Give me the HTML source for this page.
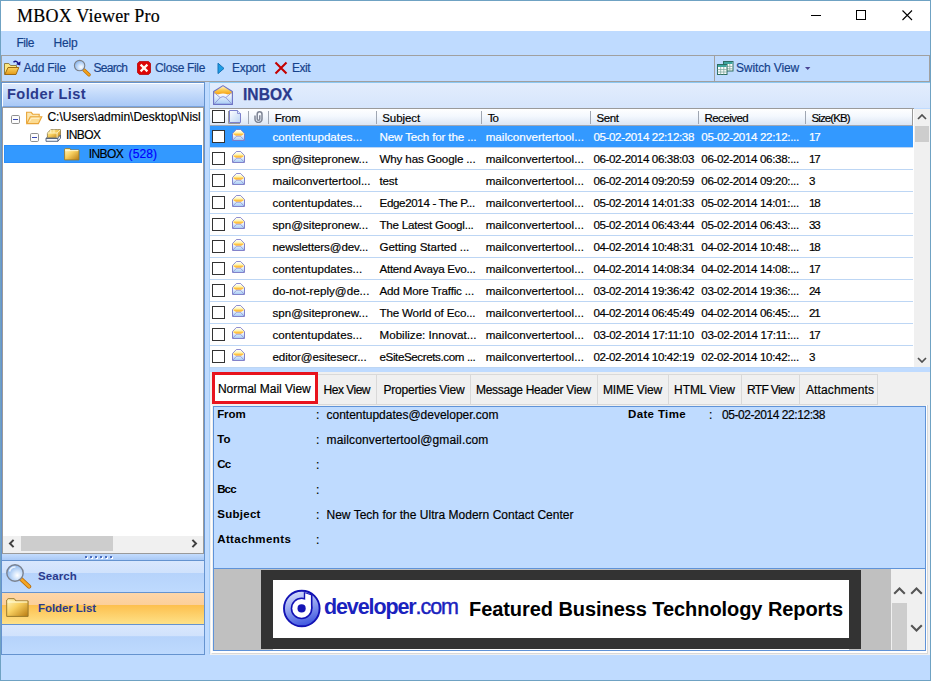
<!DOCTYPE html>
<html lang="en"><head><meta charset="utf-8"><title>MBOX Viewer Pro</title>
<style>
html,body{margin:0;padding:0;background:#BFDBFF;}
body{width:931px;height:681px;overflow:hidden;font-family:"Liberation Sans",sans-serif;font-size:12px;}
#win{position:relative;width:931px;height:681px;background:#BFDBFF;overflow:hidden;}
#win div,#win span,#win svg{position:absolute;box-sizing:border-box;}
.t{white-space:pre;line-height:1;color:#000;-webkit-text-stroke:0.18px currentColor;}
#titlebar{left:1px;top:1px;width:929px;height:30px;background:#fff;}
.wb{left:0;top:0;background:#6FA2C3;}
.tool{top:55px;height:27px;border:1px solid #A0A0A0;background:#BFDBFF;}
/* left panel */
#lp{left:1px;top:82px;width:204px;height:573px;border:1px solid #6593CF;background:#BFDBFF;}
#lph{left:2px;top:83px;width:202px;height:24px;border-left:1px solid #fff;border-top:1px solid #fff;border-bottom:1px solid #79A3DE;background:linear-gradient(#DDE9FD,#C3DAFB 45%,#A9C8F6);}
#tree{left:2px;top:107px;width:202px;height:447px;border:1px solid #9A9A9A;background:#fff;}
#treesel{left:4px;top:145px;width:198px;height:18px;background:#3399FF;border:1px solid #2A8FFB;}
#hsb{left:3px;top:536px;width:200px;height:17px;background:#F0F0F0;}
#hthumb{left:21px;top:536px;width:92px;height:15px;background:#CDCDCD;}
.nav{left:2px;width:202px;}
#grip{top:554px;height:7px;background:linear-gradient(#C4DCFD,#A9C9F6);border-bottom:1px solid #6593CF;}
#navsearch{top:561px;height:32px;background:linear-gradient(#D9E7FD 0,#D0E2FC 38%,#B6D3FB 40%,#BEDAFE 100%);border-bottom:1px solid #6593CF;}
#navfolder{top:593px;height:32px;background:linear-gradient(#FDD6A8 0,#FCCF9A 38%,#FDC04E 40%,#FEE188 100%);border-bottom:1px solid #6593CF;}
#navempty{top:625px;height:29px;background:linear-gradient(#D9E7FD 0,#D0E2FC 38%,#B6D3FB 40%,#BEDAFE 100%);}
/* right panel */
#rp{left:209px;top:82px;width:721px;height:572px;background:#BFDBFF;border-left:1px solid #A6CDF6;border-top:1px solid #8CC8F2;}
#rph{left:210px;top:83px;width:720px;height:25px;background:linear-gradient(#E2EDFD,#D6E5FC);}
#list{left:210px;top:108px;width:704px;height:259px;background:#fff;border-top:1px solid #9A9A9A;}
#colh{left:210px;top:109px;width:703px;height:17px;background:linear-gradient(#fff,#F4F8FE 45%,#DCE6F4);border-bottom:1px solid #A0A7B4;border-right:1px solid #9A9A9A;}
.csep{top:111px;width:1px;height:13px;background:#9FA6B2;}
.rsep{left:210px;width:703px;height:1px;background:#BDD6F4;}
#rowsel{left:210px;top:126px;width:703px;height:21px;background:#3399FF;}
.cb{left:212px;width:13px;height:13px;border:1px solid #333;background:#fff;}
#vsb{left:914px;top:109px;width:16px;height:258px;background:#F0F0F0;}
#vthumb{left:915px;top:126px;width:14px;height:16px;background:#CDCDCD;}
/* tabs */
#tabctl{left:210px;top:372px;width:720px;height:283px;background:#F0F0F0;}
#tabpage{left:211px;top:405px;width:717px;height:249px;border-left:1px solid #fff;border-right:1px solid #D8D8D8;border-bottom:1px solid #D8D8D8;}
#tabpage2{left:212px;top:405px;width:715px;height:248px;border-right:1px solid #fff;border-bottom:2px solid #fff;}
.tab{top:374px;height:31px;background:#F0F0F0;border:1px solid #D9D9D9;border-left:none;}
#tabsel{left:212px;top:372px;width:106px;height:32px;background:#fff;border:3px solid #E8131D;}
/* detail */
#detail{left:213px;top:406px;width:713px;height:163px;background:#BFDBFF;border:1px solid #5F93D8;border-bottom:none;}
#preview{left:213px;top:568px;width:713px;height:83px;border:1px solid #5F93D8;background:#C0C0C0;overflow:hidden;}
#pdark{left:261px;top:570px;width:600px;height:79px;background:#333;}
#pwhite{left:273px;top:580px;width:576px;height:58px;background:#fff;}
#pwhite2{left:273px;top:649px;width:576px;height:1px;background:#fff;}
#psb1{left:891px;top:569px;width:17px;height:81px;background:#F0F0F0;}
#psb2{left:908px;top:569px;width:17px;height:81px;background:#F0F0F0;}
#pthumb{left:892px;top:603px;width:15px;height:47px;background:#CDCDCD;}
.serif{font-family:"Liberation Serif",serif;}

</style></head>
<body>
<div id="win">
<svg width="0" height="0" style="left:0;top:0">
<defs>
<linearGradient id="gFold" x1="0" y1="0" x2="1" y2="1"><stop offset="0" stop-color="#FFF9C8"/><stop offset="0.45" stop-color="#F8D060"/><stop offset="1" stop-color="#B87A10"/></linearGradient>
<linearGradient id="gFold2" x1="0" y1="0" x2="0" y2="1"><stop offset="0" stop-color="#FBD25E"/><stop offset="1" stop-color="#E39A17"/></linearGradient>
<linearGradient id="gEnv" x1="0" y1="0" x2="0" y2="1"><stop offset="0" stop-color="#FFFFFF"/><stop offset="1" stop-color="#A9CDF5"/></linearGradient>
<linearGradient id="gFlap" x1="0" y1="0" x2="0" y2="1"><stop offset="0" stop-color="#FFF9DC"/><stop offset="0.45" stop-color="#FBC84A"/><stop offset="0.75" stop-color="#F6A51A"/><stop offset="1" stop-color="#FBE3A6"/></linearGradient>
<linearGradient id="gFlapS" x1="0" y1="0" x2="0" y2="1"><stop offset="0" stop-color="#FFFFFF"/><stop offset="0.45" stop-color="#FFF6B0"/><stop offset="0.75" stop-color="#FFC242"/><stop offset="1" stop-color="#FFB030"/></linearGradient>
<radialGradient id="gLens" cx="0.64" cy="0.64" r="0.8"><stop offset="0" stop-color="#FFFFFF"/><stop offset="0.3" stop-color="#D3E5FB"/><stop offset="1" stop-color="#6FA5E8"/></radialGradient>
<linearGradient id="gLogo" x1="0.2" y1="0" x2="0.5" y2="1"><stop offset="0" stop-color="#DCE2FC"/><stop offset="0.45" stop-color="#98A8F0"/><stop offset="1" stop-color="#4058E0"/></linearGradient>
<linearGradient id="gPage" x1="0" y1="0" x2="1" y2="1"><stop offset="0" stop-color="#FFFFFF"/><stop offset="1" stop-color="#BCD5F5"/></linearGradient>
<symbol id="iMail" viewBox="0 0 13 12">
 <path d="M0.5 4.5L4.3 0.6h4.4l3.8 3.9v7H0.5z" fill="#fff" stroke="#7474C4" stroke-width="0.9"/>
 <path d="M1 4.6L4.5 1.1h4l3.5 3.5v2.2H1z" fill="url(#gFlapS)"/>
 <path d="M1 4.9l3.2 2.4h4.6l3.2-2.4v6.1H1z" fill="url(#gEnv)"/>
 <path d="M4.2 7.3h4.6M1 11l3.4-3.6M12 11l-3.4-3.6" fill="none" stroke="#8A8AD0" stroke-width="0.7"/>
</symbol>
<symbol id="iExp" viewBox="0 0 9 9">
 <rect x="0.5" y="0.5" width="8" height="8" rx="1.2" fill="#FCFCFC" stroke="#8F8F8F"/>
 <path d="M2 4.5h5" stroke="#3A48B4" stroke-width="1"/>
</symbol>
<symbol id="iChevU" viewBox="0 0 10 6"><path d="M1 5l4-4l4 4" fill="none" stroke="#505050" stroke-width="1.7"/></symbol>
<symbol id="iChevD" viewBox="0 0 10 6"><path d="M1 1l4 4l4-4" fill="none" stroke="#505050" stroke-width="1.7"/></symbol>
<symbol id="iChevL" viewBox="0 0 7 9"><path d="M5.6 0.9L2 4.5l3.6 3.6" fill="none" stroke="#404040" stroke-width="2"/></symbol>
<symbol id="iChevR" viewBox="0 0 7 9"><path d="M1.4 0.9L5 4.5L1.4 8.1" fill="none" stroke="#404040" stroke-width="2"/></symbol>
</defs></svg>
<div id="titlebar"></div>
<!-- window controls -->
<svg style="left:800px;top:1px" width="130" height="30" viewBox="0 0 130 30">
 <path d="M11 14.5h10" stroke="#000" stroke-width="1" fill="none"/>
 <rect x="56.5" y="9.5" width="9" height="9" stroke="#000" stroke-width="1" fill="none"/>
 <path d="M102.5 9.5l9.5 9.5M112 9.5l-9.5 9.5" stroke="#000" stroke-width="1.1" fill="none"/>
</svg>
<!-- toolbars -->
<div class="tool" style="left:1px;width:714px"></div>
<div class="tool" style="left:714px;width:216px"></div>
<!-- left panel -->
<div id="lp"></div>
<div id="lph"></div>
<div id="tree"></div>
<div id="treesel"></div>
<div id="hsb"></div>
<div id="hthumb"></div>
<div class="nav" id="grip"></div>
<div class="nav" id="navsearch"></div>
<div class="nav" id="navfolder"></div>
<div class="nav" id="navempty"></div>
<!-- right panel -->
<div id="rp"></div>
<div id="rph"></div>
<div id="list"></div>
<div id="colh"></div>
<div id="rowsel"></div>
<div id="vsb"></div>
<div id="vthumb"></div>
<div class="csep" style="left:248px"></div>
<div class="csep" style="left:268px"></div>
<div class="csep" style="left:376px"></div>
<div class="csep" style="left:481px"></div>
<div class="csep" style="left:590px"></div>
<div class="csep" style="left:698px"></div>
<div class="csep" style="left:805px"></div>
<div class="cb" style="top:110px"></div>
<div class="rsep" style="top:147px"></div>
<div class="cb" style="top:130px"></div>
<div class="rsep" style="top:169px"></div>
<div class="cb" style="top:152px"></div>
<div class="rsep" style="top:191px"></div>
<div class="cb" style="top:174px"></div>
<div class="rsep" style="top:213px"></div>
<div class="cb" style="top:196px"></div>
<div class="rsep" style="top:235px"></div>
<div class="cb" style="top:218px"></div>
<div class="rsep" style="top:257px"></div>
<div class="cb" style="top:240px"></div>
<div class="rsep" style="top:279px"></div>
<div class="cb" style="top:262px"></div>
<div class="rsep" style="top:301px"></div>
<div class="cb" style="top:284px"></div>
<div class="rsep" style="top:323px"></div>
<div class="cb" style="top:306px"></div>
<div class="rsep" style="top:345px"></div>
<div class="cb" style="top:328px"></div>
<div class="rsep" style="top:367px"></div>
<div class="cb" style="top:350px"></div>
<!-- tabs -->
<div id="tabctl"></div>
<div id="tabpage"></div>
<div id="tabpage2"></div>
<div id="tabsel"></div>
<div class="tab" style="left:318px;width:59px"></div>
<div class="tab" style="left:377px;width:94px"></div>
<div class="tab" style="left:471px;width:127px"></div>
<div class="tab" style="left:598px;width:71px"></div>
<div class="tab" style="left:669px;width:73px"></div>
<div class="tab" style="left:742px;width:58px"></div>
<div class="tab" style="left:800px;width:78px"></div>
<div id="detail"></div>
<div id="preview"></div>
<div id="pdark"></div>
<div id="pwhite"></div>
<div id="pwhite2"></div>
<div id="psb1"></div>
<div id="psb2"></div>
<div id="pthumb"></div>
<!-- toolbar icons -->
<svg style="left:4px;top:59px" width="18" height="17" viewBox="0 0 18 17">
 <path d="M0.5 15.5V4.5h4.4l1.6 2h6v2.5" fill="#FBE67E" stroke="#8F7F45" stroke-width="1"/>
 <path d="M0.8 15.5h11.2l2.8-7H4z" fill="url(#gFold2)" stroke="#A06A12" stroke-width="1"/>
 <path d="M9.5 3.2c1.8-1.6 3.8-1.2 4.8 1.6" fill="none" stroke="#15158C" stroke-width="1.5"/>
 <path d="M12 5.2l4.2 1.3l0.3-4.2z" fill="#15158C"/>
</svg>
<svg style="left:73px;top:59px" width="18" height="18" viewBox="0 0 18 18">
 <path d="M11 11l5 4.8" stroke="#B86E08" stroke-width="3.4" stroke-linecap="round"/>
 <path d="M11 11l5 4.8" stroke="#F3A21B" stroke-width="2" stroke-linecap="round"/>
 <circle cx="6.6" cy="6.6" r="5.2" fill="url(#gLens)" stroke="#7C8088" stroke-width="1.1"/>
</svg>
<svg style="left:137px;top:61px" width="14" height="14" viewBox="0 0 14 14">
 <path d="M2.5 0.4h9l2.1 2.1v9l-2.1 2.1h-9L0.4 11.5v-9z" fill="#DD0404" stroke="#B20000" stroke-width="0.8"/>
 <path d="M3.6 3.6l6.8 6.8M10.4 3.6l-6.8 6.8" stroke="#FFF8F0" stroke-width="2.2"/>
</svg>
<svg style="left:217px;top:62px" width="9" height="13" viewBox="0 0 9 13">
 <path d="M1 1.2l6 5.2l-6 5.2z" fill="#1E9EE6" stroke="#1573B8" stroke-width="1" stroke-linejoin="round"/>
</svg>
<svg style="left:274px;top:61px" width="14" height="14" viewBox="0 0 14 14">
 <path d="M1.5 1.6l11 11M12.5 1.6l-11 11" stroke="#C40000" stroke-width="2.1"/>
</svg>
<svg style="left:717px;top:61px" width="17" height="14" viewBox="0 0 17 14">
 <rect x="6.5" y="0.5" width="9.5" height="9.5" fill="#fff" stroke="#2E6E62"/>
 <rect x="7" y="1" width="8.5" height="2" fill="#3FA6A0"/>
 <path d="M9.7 3v7M12.8 3v7M6.5 5.4h9.5M6.5 7.8h9.5" stroke="#7FA8A0" stroke-width="0.8"/>
 <rect x="0.5" y="3.5" width="9.5" height="10" fill="#fff" stroke="#2E6E62"/>
 <rect x="1" y="4" width="8.5" height="2" fill="#3FA6A0"/>
 <path d="M3.7 6v7.5M6.8 6v7.5M0.5 8.6h9.5M0.5 11h9.5" stroke="#7FA8A0" stroke-width="0.8"/>
</svg>
<svg style="left:805px;top:67px" width="6" height="4" viewBox="0 0 6 4"><path d="M0 0h5.4l-2.7 3z" fill="#4B4593"/></svg>
<!-- tree icons -->
<svg style="left:11px;top:115px" width="9" height="9"><use href="#iExp"/></svg>
<svg style="left:30px;top:133px" width="9" height="9"><use href="#iExp"/></svg>
<svg style="left:26px;top:111px" width="17" height="14" viewBox="0 0 17 14">
 <path d="M0.6 12.5V1.3h4.6l1.5 1.9h6.5v2.4" fill="#FCE7B0" stroke="#E9A538" stroke-width="1.1"/>
 <path d="M0.8 12.6h11.6l3.4-6.9H4.3z" fill="#FBDB92" stroke="#E9A538" stroke-width="1.1"/>
 <path d="M3.5 10.5l2-3.2h7.8" fill="none" stroke="#FFF3D0" stroke-width="1"/>
</svg>
<svg style="left:45px;top:128px" width="17" height="15" viewBox="0 0 17 15">
 <path d="M1 10.5l3-3.5h11.5l-2.6 3.5z" fill="#E7EEF8" stroke="#5A6A86" stroke-width="0.9"/>
 <path d="M1 10.5v2.8h11.9v-2.8zM12.9 13.3l2.6-3.2V7" fill="#F4F8FE" stroke="#4A5A76" stroke-width="0.9"/>
 <path d="M2.4 9.6V5l3.3-3.4l6.8 0l3 0v5.2l-3.4 2.8z" fill="url(#gFold)" stroke="#8A7A4A" stroke-width="0.8"/>
 <path d="M2.4 5h9.7l3.2-3.2M12.1 5v4.6M5.7 1.6v3.2M9 1.6v3.2" fill="none" stroke="#FFF6C8" stroke-width="0.9"/>
</svg>
<svg style="left:64px;top:148px" width="16" height="13" viewBox="0 0 16 13">
 <path d="M0.6 11.9V1.2l1-0.8h4.2l1.2 1.6h8v9.9z" fill="url(#gFold)" stroke="#9A7A2A" stroke-width="0.9"/>
 <path d="M1.2 2.6h13.2" stroke="#FFF8D0" stroke-width="1"/>
</svg>
<!-- header envelope -->
<svg style="left:213px;top:85px" width="20" height="20" viewBox="0 0 20 20">
 <path d="M0.6 6.5L10 0.6l9.4 5.9v5H0.6z" fill="url(#gFlap)"/>
 <path d="M1.1 8.2l4.2 1.4q4.7-2.2 9.4 0l4.2-1.4V19H1.1z" fill="url(#gEnv)"/>
 <path d="M0.6 6.5L10 0.6l9.4 5.9V19.4H0.6z" fill="none" stroke="#6C72C4" stroke-width="1.1" stroke-linejoin="round"/>
 <path d="M1.2 7.6l6 5M18.8 7.6l-6 5M1.2 19l6-6.4q2.8-2 5.6 0l6 6.4" fill="none" stroke="#8D93D4" stroke-width="0.9"/>
</svg>
<!-- column header icons -->
<svg style="left:228px;top:110px" width="14" height="14" viewBox="0 0 14 14">
 <path d="M0.5 1v12.5h11.5" fill="none" stroke="#9A9A9A" stroke-width="1"/>
 <path d="M1.5 0.5h8l3 3v9h-11z" fill="url(#gPage)" stroke="#7B80CC" stroke-width="1"/>
 <path d="M9.5 0.5v3h3" fill="#DDEBFB" stroke="#7B80CC" stroke-width="0.8"/>
</svg>
<svg style="left:253px;top:111px" width="11" height="12" viewBox="0 0 11 12">
 <path d="M2 4.5V8a3.5 3.5 0 0 0 7 0V3.2a2.4 2.4 0 0 0-4.8 0V8a1.3 1.3 0 0 0 2.6 0V4.2" fill="none" stroke="#7D8494" stroke-width="1.5"/>
</svg>
<svg style="left:232px;top:129px" width="13" height="12"><use href="#iMail"/></svg>
<svg style="left:232px;top:151px" width="13" height="12"><use href="#iMail"/></svg>
<svg style="left:232px;top:173px" width="13" height="12"><use href="#iMail"/></svg>
<svg style="left:232px;top:195px" width="13" height="12"><use href="#iMail"/></svg>
<svg style="left:232px;top:217px" width="13" height="12"><use href="#iMail"/></svg>
<svg style="left:232px;top:239px" width="13" height="12"><use href="#iMail"/></svg>
<svg style="left:232px;top:261px" width="13" height="12"><use href="#iMail"/></svg>
<svg style="left:232px;top:283px" width="13" height="12"><use href="#iMail"/></svg>
<svg style="left:232px;top:305px" width="13" height="12"><use href="#iMail"/></svg>
<svg style="left:232px;top:327px" width="13" height="12"><use href="#iMail"/></svg>
<svg style="left:232px;top:349px" width="13" height="12"><use href="#iMail"/></svg>
<!-- scrollbar arrows -->
<svg style="left:917px;top:114px" width="10" height="6"><use href="#iChevU"/></svg>
<svg style="left:917px;top:357px" width="10" height="6"><use href="#iChevD"/></svg>
<svg style="left:8px;top:539px" width="7" height="9"><use href="#iChevL"/></svg>
<svg style="left:191px;top:539px" width="7" height="9"><use href="#iChevR"/></svg>
<svg style="left:893px;top:586px" width="13" height="9" viewBox="0 0 13 9"><path d="M1.2 7.8l5.3-5.3l5.3 5.3" fill="none" stroke="#555" stroke-width="2.1"/></svg>
<svg style="left:910px;top:586px" width="13" height="9" viewBox="0 0 13 9"><path d="M1.2 7.8l5.3-5.3l5.3 5.3" fill="none" stroke="#555" stroke-width="2.1"/></svg>
<svg style="left:910px;top:624px" width="13" height="9" viewBox="0 0 13 9"><path d="M1.2 1.2l5.3 5.3l5.3-5.3" fill="none" stroke="#555" stroke-width="2.1"/></svg>
<!-- nav icons -->
<svg style="left:5px;top:563px" width="27" height="27" viewBox="0 0 27 27">
 <path d="M16 16l8 7.5" stroke="#B4690A" stroke-width="4.4" stroke-linecap="round"/>
 <path d="M16 16l8 7.5" stroke="#F5A623" stroke-width="2.8" stroke-linecap="round"/>
 <circle cx="10" cy="10" r="8.2" fill="url(#gLens)" stroke="#7A8290" stroke-width="1.4"/>
 <path d="M4.5 8.5a6 6 0 0 1 6-4.5" fill="none" stroke="#fff" stroke-width="1.6" opacity="0.8"/>
</svg>
<svg style="left:6px;top:598px" width="23" height="20" viewBox="0 0 23 20">
 <path d="M0.7 18.4V2l1.4-1.3h6.2l1.6 2.2h12.2v15.5z" fill="url(#gFold)" stroke="#9A7A2A" stroke-width="1"/>
 <path d="M1.5 4h19.8" stroke="#FFF8D0" stroke-width="1.2"/>
</svg>
<!-- gripper dots -->
<svg style="left:85px;top:556px" width="29" height="4" viewBox="0 0 29 4"><rect x="1" y="1" width="2" height="2" fill="#fff"/><rect x="0" y="0" width="2" height="2" fill="#4C6FBE"/><rect x="6" y="1" width="2" height="2" fill="#fff"/><rect x="5" y="0" width="2" height="2" fill="#4C6FBE"/><rect x="11" y="1" width="2" height="2" fill="#fff"/><rect x="10" y="0" width="2" height="2" fill="#4C6FBE"/><rect x="16" y="1" width="2" height="2" fill="#fff"/><rect x="15" y="0" width="2" height="2" fill="#4C6FBE"/><rect x="21" y="1" width="2" height="2" fill="#fff"/><rect x="20" y="0" width="2" height="2" fill="#4C6FBE"/><rect x="26" y="1" width="2" height="2" fill="#fff"/><rect x="25" y="0" width="2" height="2" fill="#4C6FBE"/></svg>
<!-- developer.com logo mark -->
<svg style="left:282px;top:589px" width="40" height="40" viewBox="0 0 40 40">
 <circle cx="19.8" cy="19.5" r="17.8" fill="url(#gLogo)" stroke="#1212B4" stroke-width="1.9"/>
 <path d="M21.8 2.9V19.5h8.7V5.6z" fill="#1212B4"/>
 <circle cx="19.6" cy="19.4" r="10.9" fill="#1212B4"/>
 <path d="M23.2 4.2V19.5h5.7V6.2z" fill="#fff"/>
 <circle cx="19.6" cy="19.4" r="9.3" fill="#fff"/>
 <circle cx="19.6" cy="19.4" r="4.1" fill="#1414B4"/>
</svg>
<!-- window border -->
<div class="wb" style="width:931px;height:1px"></div>
<div class="wb" style="width:1px;height:681px"></div>
<div class="wb" style="left:930px;width:1px;height:681px"></div>
<div class="wb" style="top:680px;width:931px;height:1px"></div>

<!-- text layer -->
<span class="t serif" style="left:17.0px;top:6.92px;font-size:18px;letter-spacing:0.227px;">MBOX Viewer Pro</span>
<span class="t" style="left:16.5px;top:37.34px;font-size:12px;color:#15428B;letter-spacing:-0.461px;">File</span>
<span class="t" style="left:53.5px;top:37.34px;font-size:12px;color:#15428B;letter-spacing:-0.172px;">Help</span>
<span class="t" style="left:23.4px;top:61.84px;font-size:12px;color:#15428B;letter-spacing:-0.216px;">Add File</span>
<span class="t" style="left:93.5px;top:61.84px;font-size:12px;color:#15428B;letter-spacing:-0.705px;">Search</span>
<span class="t" style="left:155.0px;top:61.84px;font-size:12px;color:#15428B;letter-spacing:-0.336px;">Close File</span>
<span class="t" style="left:232.0px;top:61.84px;font-size:12px;color:#15428B;letter-spacing:-0.281px;">Export</span>
<span class="t" style="left:292.0px;top:61.84px;font-size:12px;color:#15428B;letter-spacing:-0.504px;">Exit</span>
<span class="t" style="left:736.0px;top:61.84px;font-size:12px;color:#15428B;letter-spacing:-0.135px;">Switch View</span>
<span class="t" style="left:7.0px;top:87.34px;font-size:14.6px;font-weight:700;-webkit-text-stroke:0;color:#2B3A8C;letter-spacing:0.401px;">Folder List</span>
<span class="t" style="left:47.4px;top:111.34px;font-size:12px;">C:\Users\admin\Desktop\Nisl</span>
<span class="t" style="left:66.0px;top:129.24px;font-size:12px;letter-spacing:-0.589px;">INBOX</span>
<span class="t" style="left:88.7px;top:148.14px;font-size:12px;letter-spacing:-0.589px;">INBOX</span>
<span class="t" style="left:128.6px;top:148.14px;font-size:12px;color:#0000FF;letter-spacing:0.077px;">(528)</span>
<span class="t" style="left:38.0px;top:571.07px;font-size:11.5px;font-weight:700;-webkit-text-stroke:0;color:#2B3A8C;letter-spacing:0.107px;">Search</span>
<span class="t" style="left:38.0px;top:603.27px;font-size:11.5px;font-weight:700;-webkit-text-stroke:0;color:#2B3A8C;letter-spacing:-0.071px;">Folder List</span>
<span class="t" style="left:243.0px;top:86.69px;font-size:15.6px;font-weight:700;-webkit-text-stroke:0;color:#2B3A8C;letter-spacing:0.022px;-webkit-text-stroke:0.25px #2B3A8C;">INBOX</span>
<span class="t" style="left:274.7px;top:112.57px;font-size:11.5px;letter-spacing:-0.261px;">From</span>
<span class="t" style="left:382.2px;top:112.57px;font-size:11.5px;letter-spacing:-0.051px;">Subject</span>
<span class="t" style="left:487.7px;top:112.57px;font-size:11.5px;letter-spacing:-0.828px;">To</span>
<span class="t" style="left:596.5px;top:112.57px;font-size:11.5px;letter-spacing:-0.368px;">Sent</span>
<span class="t" style="left:704.4px;top:112.57px;font-size:11.5px;letter-spacing:-0.519px;">Received</span>
<span class="t" style="left:811.6px;top:112.57px;font-size:11.5px;letter-spacing:-0.922px;">Size(KB)</span>
<span class="t" style="left:272.5px;top:131.38px;font-size:11.6px;color:#fff;letter-spacing:0.050px;">contentupdates...</span>
<span class="t" style="left:379.5px;top:131.38px;font-size:11.6px;color:#fff;letter-spacing:-0.139px;">New Tech for the ...</span>
<span class="t" style="left:485.7px;top:131.38px;font-size:11.6px;color:#fff;letter-spacing:0.012px;">mailconvertertool...</span>
<span class="t" style="left:593.4px;top:131.38px;font-size:11.6px;color:#fff;letter-spacing:-0.371px;">05-02-2014 22:12:38</span>
<span class="t" style="left:701.3px;top:131.38px;font-size:11.6px;color:#fff;letter-spacing:-0.347px;">05-02-2014 22:12:...</span>
<span class="t" style="left:809.0px;top:131.38px;font-size:11.6px;color:#fff;letter-spacing:-1.203px;">17</span>
<span class="t" style="left:272.5px;top:153.38px;font-size:11.6px;letter-spacing:0.008px;">spn@sitepronew...</span>
<span class="t" style="left:379.5px;top:153.38px;font-size:11.6px;letter-spacing:-0.144px;">Why has Google ...</span>
<span class="t" style="left:485.7px;top:153.38px;font-size:11.6px;letter-spacing:0.012px;">mailconvertertool...</span>
<span class="t" style="left:593.4px;top:153.38px;font-size:11.6px;letter-spacing:-0.371px;">06-02-2014 06:38:03</span>
<span class="t" style="left:701.3px;top:153.38px;font-size:11.6px;letter-spacing:-0.347px;">06-02-2014 06:38:...</span>
<span class="t" style="left:809.0px;top:153.38px;font-size:11.6px;letter-spacing:-1.203px;">17</span>
<span class="t" style="left:272.5px;top:175.38px;font-size:11.6px;letter-spacing:0.007px;">mailconvertertool...</span>
<span class="t" style="left:379.5px;top:175.38px;font-size:11.6px;letter-spacing:-0.172px;">test</span>
<span class="t" style="left:485.7px;top:175.38px;font-size:11.6px;letter-spacing:0.012px;">mailconvertertool...</span>
<span class="t" style="left:593.4px;top:175.38px;font-size:11.6px;letter-spacing:-0.371px;">06-02-2014 09:20:59</span>
<span class="t" style="left:701.3px;top:175.38px;font-size:11.6px;letter-spacing:-0.347px;">06-02-2014 09:20:...</span>
<span class="t" style="left:809.0px;top:175.38px;font-size:11.6px;letter-spacing:-1.253px;">3</span>
<span class="t" style="left:272.5px;top:197.38px;font-size:11.6px;letter-spacing:0.050px;">contentupdates...</span>
<span class="t" style="left:379.5px;top:197.38px;font-size:11.6px;letter-spacing:-0.356px;">Edge2014 - The P...</span>
<span class="t" style="left:485.7px;top:197.38px;font-size:11.6px;letter-spacing:0.012px;">mailconvertertool...</span>
<span class="t" style="left:593.4px;top:197.38px;font-size:11.6px;letter-spacing:-0.371px;">05-02-2014 14:01:33</span>
<span class="t" style="left:701.3px;top:197.38px;font-size:11.6px;letter-spacing:-0.347px;">05-02-2014 14:01:...</span>
<span class="t" style="left:809.0px;top:197.38px;font-size:11.6px;letter-spacing:-1.203px;">18</span>
<span class="t" style="left:272.5px;top:219.38px;font-size:11.6px;letter-spacing:0.008px;">spn@sitepronew...</span>
<span class="t" style="left:379.5px;top:219.38px;font-size:11.6px;letter-spacing:-0.237px;">The Latest Googl...</span>
<span class="t" style="left:485.7px;top:219.38px;font-size:11.6px;letter-spacing:0.012px;">mailconvertertool...</span>
<span class="t" style="left:593.4px;top:219.38px;font-size:11.6px;letter-spacing:-0.371px;">05-02-2014 06:43:44</span>
<span class="t" style="left:701.3px;top:219.38px;font-size:11.6px;letter-spacing:-0.347px;">05-02-2014 06:43:...</span>
<span class="t" style="left:809.0px;top:219.38px;font-size:11.6px;letter-spacing:-1.203px;">33</span>
<span class="t" style="left:272.5px;top:241.38px;font-size:11.6px;letter-spacing:-0.123px;">newsletters@dev...</span>
<span class="t" style="left:379.5px;top:241.38px;font-size:11.6px;letter-spacing:-0.057px;">Getting Started ...</span>
<span class="t" style="left:485.7px;top:241.38px;font-size:11.6px;letter-spacing:0.012px;">mailconvertertool...</span>
<span class="t" style="left:593.4px;top:241.38px;font-size:11.6px;letter-spacing:-0.371px;">04-02-2014 10:48:31</span>
<span class="t" style="left:701.3px;top:241.38px;font-size:11.6px;letter-spacing:-0.347px;">04-02-2014 10:48:...</span>
<span class="t" style="left:809.0px;top:241.38px;font-size:11.6px;letter-spacing:-1.203px;">18</span>
<span class="t" style="left:272.5px;top:263.38px;font-size:11.6px;letter-spacing:0.050px;">contentupdates...</span>
<span class="t" style="left:379.5px;top:263.38px;font-size:11.6px;letter-spacing:-0.268px;">Attend Avaya Evo...</span>
<span class="t" style="left:485.7px;top:263.38px;font-size:11.6px;letter-spacing:0.012px;">mailconvertertool...</span>
<span class="t" style="left:593.4px;top:263.38px;font-size:11.6px;letter-spacing:-0.371px;">04-02-2014 14:08:34</span>
<span class="t" style="left:701.3px;top:263.38px;font-size:11.6px;letter-spacing:-0.347px;">04-02-2014 14:08:...</span>
<span class="t" style="left:809.0px;top:263.38px;font-size:11.6px;letter-spacing:-1.203px;">17</span>
<span class="t" style="left:272.5px;top:285.38px;font-size:11.6px;letter-spacing:0.039px;">do-not-reply@de...</span>
<span class="t" style="left:379.5px;top:285.38px;font-size:11.6px;letter-spacing:-0.162px;">Add More Traffic ...</span>
<span class="t" style="left:485.7px;top:285.38px;font-size:11.6px;letter-spacing:0.012px;">mailconvertertool...</span>
<span class="t" style="left:593.4px;top:285.38px;font-size:11.6px;letter-spacing:-0.371px;">03-02-2014 19:36:42</span>
<span class="t" style="left:701.3px;top:285.38px;font-size:11.6px;letter-spacing:-0.347px;">03-02-2014 19:36:...</span>
<span class="t" style="left:809.0px;top:285.38px;font-size:11.6px;letter-spacing:-1.203px;">24</span>
<span class="t" style="left:272.5px;top:307.38px;font-size:11.6px;letter-spacing:0.008px;">spn@sitepronew...</span>
<span class="t" style="left:379.5px;top:307.38px;font-size:11.6px;letter-spacing:-0.165px;">The World of Eco...</span>
<span class="t" style="left:485.7px;top:307.38px;font-size:11.6px;letter-spacing:0.012px;">mailconvertertool...</span>
<span class="t" style="left:593.4px;top:307.38px;font-size:11.6px;letter-spacing:-0.371px;">04-02-2014 06:45:49</span>
<span class="t" style="left:701.3px;top:307.38px;font-size:11.6px;letter-spacing:-0.347px;">04-02-2014 06:45:...</span>
<span class="t" style="left:809.0px;top:307.38px;font-size:11.6px;letter-spacing:-1.203px;">21</span>
<span class="t" style="left:272.5px;top:329.38px;font-size:11.6px;letter-spacing:0.050px;">contentupdates...</span>
<span class="t" style="left:379.5px;top:329.38px;font-size:11.6px;letter-spacing:0.011px;">Mobilize: Innovat...</span>
<span class="t" style="left:485.7px;top:329.38px;font-size:11.6px;letter-spacing:0.012px;">mailconvertertool...</span>
<span class="t" style="left:593.4px;top:329.38px;font-size:11.6px;letter-spacing:-0.326px;">03-02-2014 17:11:10</span>
<span class="t" style="left:701.3px;top:329.38px;font-size:11.6px;letter-spacing:-0.303px;">03-02-2014 17:11:...</span>
<span class="t" style="left:809.0px;top:329.38px;font-size:11.6px;letter-spacing:-1.203px;">17</span>
<span class="t" style="left:272.5px;top:351.38px;font-size:11.6px;letter-spacing:-0.115px;">editor@esitesecr...</span>
<span class="t" style="left:379.5px;top:351.38px;font-size:11.6px;letter-spacing:-0.392px;">eSiteSecrets.com ...</span>
<span class="t" style="left:485.7px;top:351.38px;font-size:11.6px;letter-spacing:0.012px;">mailconvertertool...</span>
<span class="t" style="left:593.4px;top:351.38px;font-size:11.6px;letter-spacing:-0.371px;">02-02-2014 10:42:19</span>
<span class="t" style="left:701.3px;top:351.38px;font-size:11.6px;letter-spacing:-0.347px;">02-02-2014 10:42:...</span>
<span class="t" style="left:809.0px;top:351.38px;font-size:11.6px;letter-spacing:-1.253px;">3</span>
<span class="t" style="left:217.9px;top:382.64px;font-size:12px;letter-spacing:-0.021px;">Normal Mail View</span>
<span class="t" style="left:323.6px;top:383.64px;font-size:12px;letter-spacing:-0.509px;">Hex View</span>
<span class="t" style="left:383.4px;top:383.64px;font-size:12px;letter-spacing:-0.189px;">Properties View</span>
<span class="t" style="left:476.0px;top:383.64px;font-size:12px;letter-spacing:-0.290px;">Message Header View</span>
<span class="t" style="left:603.0px;top:383.64px;font-size:12px;letter-spacing:-0.163px;">MIME View</span>
<span class="t" style="left:674.0px;top:383.64px;font-size:12px;letter-spacing:-0.040px;">HTML View</span>
<span class="t" style="left:747.0px;top:383.64px;font-size:12px;letter-spacing:-0.656px;">RTF View</span>
<span class="t" style="left:806.0px;top:383.64px;font-size:12px;letter-spacing:0.118px;">Attachments</span>
<span class="t" style="left:217.2px;top:409.07px;font-size:11.5px;font-weight:700;-webkit-text-stroke:0;letter-spacing:-0.088px;">From</span>
<span class="t" style="left:316.0px;top:409.04px;font-size:12px;">:</span>
<span class="t" style="left:326.5px;top:408.84px;font-size:12px;letter-spacing:-0.011px;">contentupdates@developer.com</span>
<span class="t" style="left:217.2px;top:434.07px;font-size:11.5px;font-weight:700;-webkit-text-stroke:0;letter-spacing:0.148px;">To</span>
<span class="t" style="left:316.0px;top:434.04px;font-size:12px;">:</span>
<span class="t" style="left:326.5px;top:433.84px;font-size:12px;letter-spacing:0.139px;">mailconvertertool@gmail.com</span>
<span class="t" style="left:217.2px;top:459.07px;font-size:11.5px;font-weight:700;-webkit-text-stroke:0;letter-spacing:-0.852px;">Cc</span>
<span class="t" style="left:316.0px;top:459.04px;font-size:12px;">:</span>
<span class="t" style="left:217.2px;top:484.07px;font-size:11.5px;font-weight:700;-webkit-text-stroke:0;letter-spacing:-0.870px;">Bcc</span>
<span class="t" style="left:316.0px;top:484.04px;font-size:12px;">:</span>
<span class="t" style="left:217.2px;top:509.07px;font-size:11.5px;font-weight:700;-webkit-text-stroke:0;letter-spacing:0.279px;">Subject</span>
<span class="t" style="left:316.0px;top:509.04px;font-size:12px;">:</span>
<span class="t" style="left:326.5px;top:508.84px;font-size:12px;letter-spacing:0.010px;">New Tech for the Ultra Modern Contact Center</span>
<span class="t" style="left:217.2px;top:534.07px;font-size:11.5px;font-weight:700;-webkit-text-stroke:0;letter-spacing:0.395px;">Attachments</span>
<span class="t" style="left:316.0px;top:534.04px;font-size:12px;">:</span>
<span class="t" style="left:628.0px;top:409.07px;font-size:11.5px;font-weight:700;-webkit-text-stroke:0;letter-spacing:0.359px;">Date Time</span>
<span class="t" style="left:709.0px;top:408.84px;font-size:12px;">:</span>
<span class="t" style="left:722.0px;top:408.84px;font-size:12px;letter-spacing:-0.444px;">05-02-2014 22:12:38</span>
<span class="t" style="left:469.0px;top:598.57px;font-size:20px;font-weight:700;-webkit-text-stroke:0;letter-spacing:-0.066px;">Featured Business Technology Reports</span>
<span class="t" style="left:324.0px;top:597.30px;font-size:21.5px;font-weight:700;-webkit-text-stroke:0;color:#1A22BE;letter-spacing:-1.120px;">developer</span>
<span class="t" style="left:415.5px;top:597.30px;font-size:21.5px;color:#1A22BE;letter-spacing:-1.023px;-webkit-text-stroke:0.4px #1A22BE;">.com</span>
</div>
</body></html>
